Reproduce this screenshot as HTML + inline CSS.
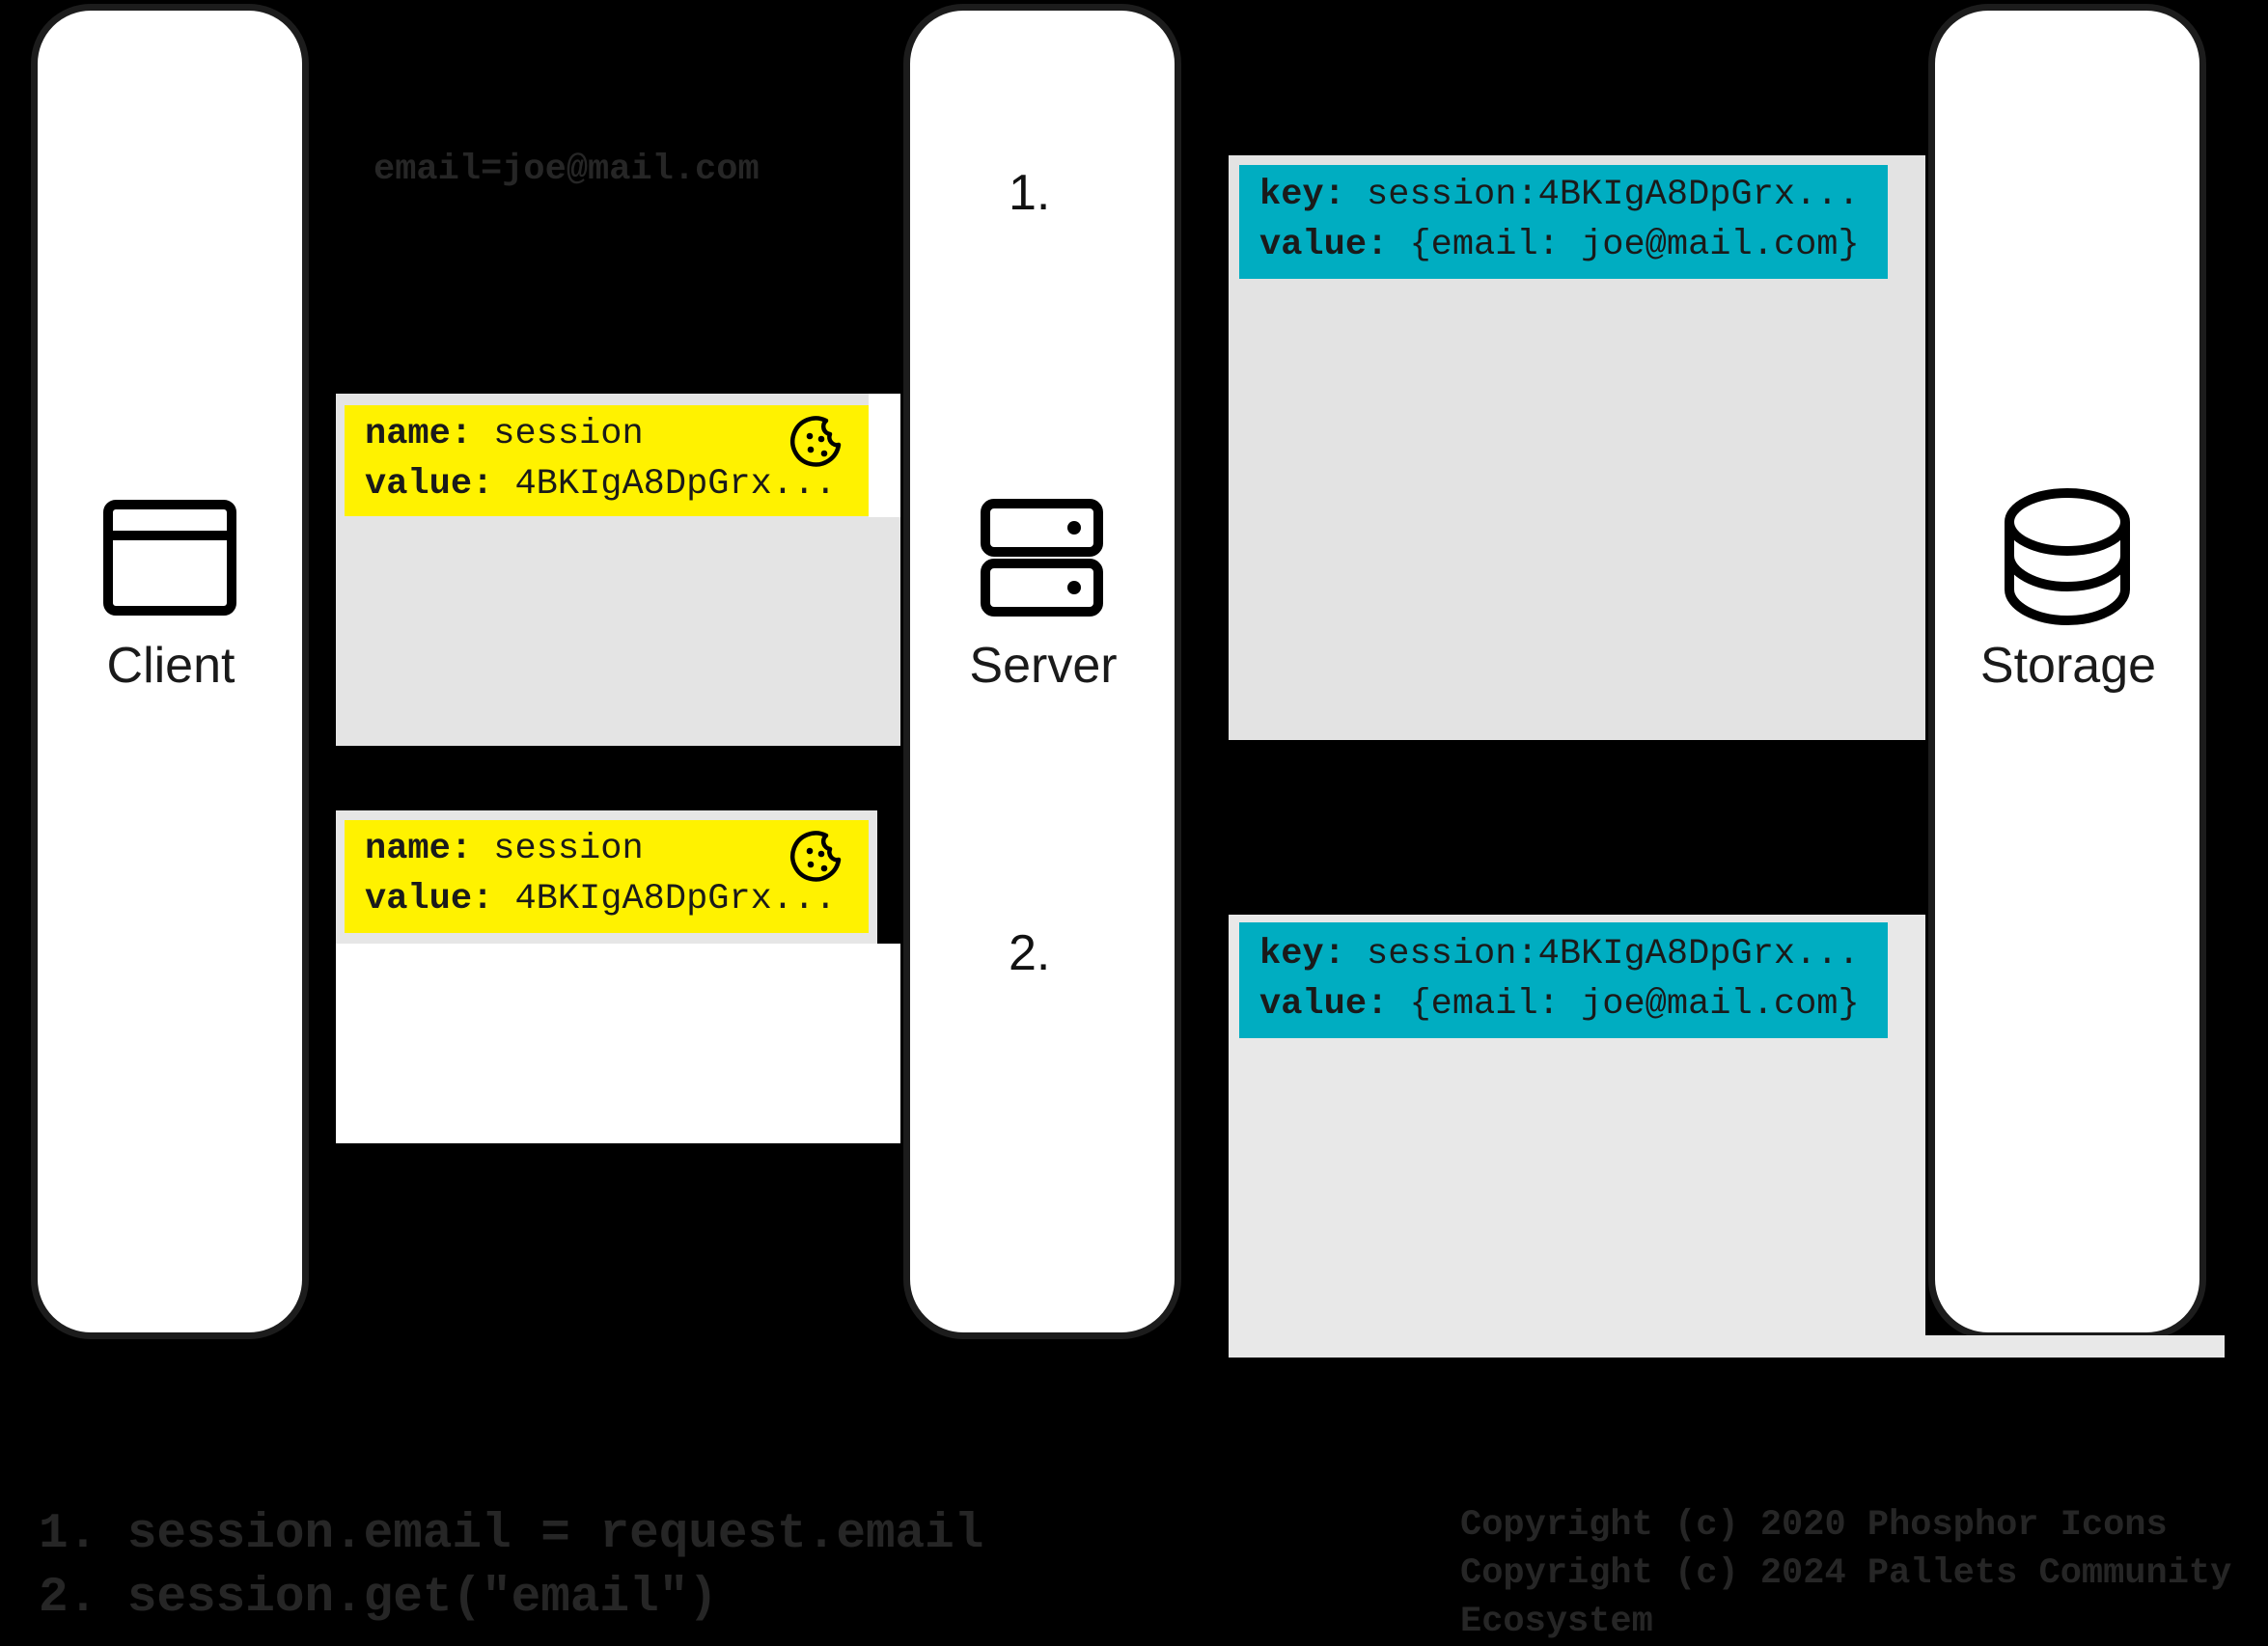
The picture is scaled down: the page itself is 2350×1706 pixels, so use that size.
<!DOCTYPE html>
<html><head><meta charset="utf-8"><style>
html,body{margin:0;padding:0;background:#000;}
body{width:2350px;height:1701px;position:relative;overflow:hidden;font-family:"Liberation Sans",sans-serif;}
.a{position:absolute;}
.pillar{position:absolute;background:#fff;border:7px solid #1c1c1c;border-radius:62px;box-sizing:border-box;}
.mono{font-family:"Liberation Mono",monospace;font-size:37px;color:#1a1a1a;white-space:pre;line-height:52px;}
.mono b{font-weight:bold;}
.lbl{position:absolute;font-size:52px;color:#1a1a1a;text-align:center;width:278px;}
</style></head><body>

<div class="pillar" style="left:32px;top:4px;width:288px;height:1384px"></div>
<div class="pillar" style="left:936px;top:4px;width:288px;height:1384px"></div>
<div class="pillar" style="left:1998px;top:4px;width:288px;height:1384px"></div>

<div class="a mono" style="left:387px;top:150px;color:#262626;font-weight:bold">email=joe@mail.com</div>

<!-- left panels -->
<div class="a" style="left:348px;top:408px;width:585px;height:365px;background:#e4e4e4"></div>
<div class="a" style="left:900px;top:408px;width:33px;height:128px;background:#fff"></div>
<div class="a" style="left:357px;top:420px;width:543px;height:115px;background:#fff200"></div>
<div class="a mono" style="left:378px;top:424px"><b>name:</b> session
<b>value:</b> 4BKIgA8DpGrx...</div>

<div class="a" style="left:348px;top:978px;width:585px;height:207px;background:#fff"></div>
<div class="a" style="left:348px;top:840px;width:561px;height:138px;background:#e6e6e6"></div>
<div class="a" style="left:357px;top:850px;width:543px;height:117px;background:#fff200"></div>
<div class="a mono" style="left:378px;top:854px"><b>name:</b> session
<b>value:</b> 4BKIgA8DpGrx...</div>

<svg class="a" style="left:816px;top:428px" width="60" height="60" viewBox="0 0 60 60">
<path d="M40 8 A24 24 0 1 0 53 33 A8 8 0 0 1 44 22 A8 8 0 0 1 40 8 Z" fill="none" stroke="#000" stroke-width="4.5" stroke-linejoin="round"/>
<circle cx="23" cy="24" r="3.3"/><circle cx="35" cy="27" r="3.3"/><circle cx="24" cy="38" r="3.3"/><circle cx="38" cy="42" r="3.3"/>
</svg>
<svg class="a" style="left:816px;top:858px" width="60" height="60" viewBox="0 0 60 60">
<path d="M40 8 A24 24 0 1 0 53 33 A8 8 0 0 1 44 22 A8 8 0 0 1 40 8 Z" fill="none" stroke="#000" stroke-width="4.5" stroke-linejoin="round"/>
<circle cx="23" cy="24" r="3.3"/><circle cx="35" cy="27" r="3.3"/><circle cx="24" cy="38" r="3.3"/><circle cx="38" cy="42" r="3.3"/>
</svg>

<!-- right panels -->
<div class="a" style="left:1273px;top:161px;width:722px;height:606px;background:#e3e3e3"></div>
<div class="a" style="left:1284px;top:171px;width:672px;height:118px;background:#00adc1"></div>
<div class="a mono" style="left:1305px;top:176px"><b>key:</b> session:4BKIgA8DpGrx...
<b>value:</b> {email: joe@mail.com}</div>

<div class="a" style="left:1273px;top:948px;width:722px;height:459px;background:#e8e8e8"></div>
<div class="a" style="left:1995px;top:1384px;width:310px;height:23px;background:#e8e8e8"></div>
<div class="a" style="left:1284px;top:956px;width:672px;height:120px;background:#00adc1"></div>
<div class="a mono" style="left:1305px;top:963px"><b>key:</b> session:4BKIgA8DpGrx...
<b>value:</b> {email: joe@mail.com}</div>

<!-- icons -->
<svg class="a" style="left:102px;top:513px" width="150" height="126"><rect x="10" y="10" width="128" height="110" rx="8" fill="none" stroke="#000" stroke-width="10"/><line x1="10" y1="42" x2="138" y2="42" stroke="#000" stroke-width="10"/></svg>
<div class="lbl" style="left:38px;top:660px">Client</div>

<svg class="a" style="left:1012px;top:513px" width="136" height="126"><rect x="9" y="9" width="117" height="50" rx="9" fill="none" stroke="#000" stroke-width="10"/><rect x="9" y="71" width="117" height="50" rx="9" fill="none" stroke="#000" stroke-width="10"/><circle cx="101" cy="34" r="7"/><circle cx="101" cy="96" r="7"/></svg>
<div class="lbl" style="left:942px;top:660px">Server</div>

<svg class="a" style="left:2072px;top:503px" width="140" height="148"><g fill="none" stroke="#000" stroke-width="10"><ellipse cx="70" cy="38" rx="60" ry="30"/><path d="M10 38 V108 C10 125 37 140 70 140 C103 140 130 125 130 108 V38"/><path d="M10 73 C10 90 37 105 70 105 C103 105 130 90 130 73"/></g></svg>
<div class="lbl" style="left:2004px;top:660px">Storage</div>

<div class="a" style="left:1045px;top:170px;font-family:'Liberation Sans',sans-serif;font-size:52px;color:#111">1.</div>
<div class="a" style="left:1045px;top:958px;font-family:'Liberation Sans',sans-serif;font-size:52px;color:#111">2.</div>

<div class="a" style="left:40px;top:1558px;font-family:'Liberation Mono',monospace;font-size:51px;color:#262626;font-weight:bold;line-height:66px;white-space:pre">1. session.email = request.email
2. session.get("email")</div>
<div class="a" style="left:1513px;top:1556px;font-family:'Liberation Mono',monospace;font-size:37px;color:#262626;font-weight:bold;line-height:50px;white-space:pre">Copyright (c) 2020 Phosphor Icons
Copyright (c) 2024 Pallets Community
Ecosystem</div>
</body></html>
